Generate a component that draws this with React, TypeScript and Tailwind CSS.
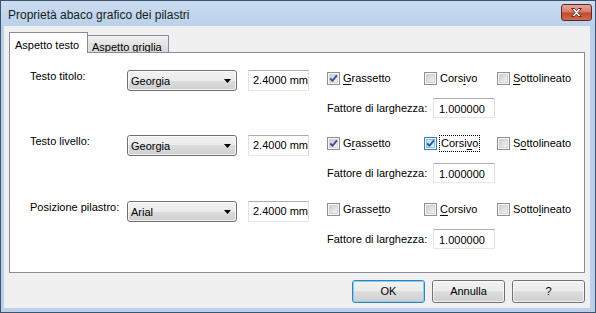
import React from "react";

type CB = { checked?: boolean; hot?: boolean; id: string };

function CheckBox({ checked, hot, id }: CB) {
  return (
    <svg width="13" height="13" viewBox="0 0 13 13" className="shrink-0">
      <defs>
        <linearGradient id={`g-${id}`} x1="0" y1="0" x2="1" y2="1">
          <stop offset="0" stopColor={hot ? "#b9dcf3" : "#c9ccd1"} />
          <stop offset="1" stopColor={hot ? "#eaf6fd" : "#f6f6f6"} />
        </linearGradient>
      </defs>
      <rect x="0.5" y="0.5" width="12" height="12" fill="#f7f7f7" stroke={hot ? "#3c7fb1" : "#8e8f8f"} />
      <rect x="2.5" y="2.5" width="8" height="8" fill={`url(#g-${id})`} stroke={hot ? "#79c6f9" : "#d4d4d4"} />
      {checked && (
        <path d="M3.3 6.4 L5.4 8.9 L9.9 3.4" fill="none" stroke="#3b4d8e" strokeWidth="1.8" strokeLinejoin="round" />
      )}
    </svg>
  );
}

function Mn({ text, idx }: { text: string; idx: number }) {
  return (
    <>
      {text.slice(0, idx)}
      <span className="underline underline-offset-[2px]">{text[idx]}</span>
      {text.slice(idx + 1)}
    </>
  );
}

function Combo({ value }: { value: string }) {
  return (
    <div className="w-[110px] h-[21px] rounded-[3px] border border-[#707070] flex items-center relative overflow-hidden bg-[linear-gradient(#f2f2f2_0%,#ebebeb_50%,#dddddd_50%,#cfcfcf_100%)]">
      <div className="absolute inset-0 rounded-[2px] border border-white/70" />
      <span className="pl-[3px] pt-[1px] relative">{value}</span>
      <svg width="7" height="4" viewBox="0 0 7 4" className="absolute right-[5px] top-[8px]">
        <path d="M0 0 H7 L3.5 4 Z" fill="#000" />
      </svg>
    </div>
  );
}

function TextBox({ value, w }: { value: string; w: string }) {
  return (
    <div className={`${w} h-[21px] bg-white border border-[#e3e9ef] border-t-[#abadb3] border-l-[#e2e3ea] border-r-[#dbdfe6] flex items-center pl-[4px] whitespace-nowrap overflow-hidden`}>
      {value}
    </div>
  );
}

type CheckItem = { text: string; idx: number; checked?: boolean; hot?: boolean; focus?: boolean };

function Group({ label, font, items, mt, id }: { label: string; font: string; items: CheckItem[]; mt: string; id: string }) {
  const widths = ["w-[97px]", "w-[73px]", ""];
  return (
    <div className={mt}>
      <div className="flex h-[21px]">
        <div className="w-[97px] leading-[13px]">{label}</div>
        <Combo value={font} />
        <div className="w-[11px]" />
        <TextBox value="2.4000 mm" w="w-[61px]" />
        <div className="w-[18px]" />
        <div className="flex pt-[2px]">
          {items.map((it, i) => (
            <div key={i} className={`${widths[i]} flex items-start h-[13px]`}>
              <CheckBox checked={it.checked} hot={it.hot} id={`${id}-${i}`} />
              {it.focus ? (
                <span className="ml-[2px] -mt-[2px] border border-dotted border-black px-[1px] leading-[15px]">
                  <Mn text={it.text} idx={it.idx} />
                </span>
              ) : (
                <span className="ml-[3px] leading-[13px]">
                  <Mn text={it.text} idx={it.idx} />
                </span>
              )}
            </div>
          ))}
        </div>
      </div>
      <div className="flex items-center h-[20px] mt-[7px] ml-[297px]">
        <div className="w-[106px] pt-[1px] whitespace-nowrap">Fattore di larghezza:</div>
        <div className="w-[62px] h-[20px] bg-white border border-[#e3e9ef] border-t-[#abadb3] border-l-[#e2e3ea] border-r-[#dbdfe6] flex items-center pl-[5px] pt-[2px]">
          1.000000
        </div>
      </div>
    </div>
  );
}

function Btn({ label, def }: { label: string; def?: boolean }) {
  return (
    <div
      className={`w-[73px] h-[23px] rounded-[3px] border flex items-center justify-center relative ${
        def ? "border-[#3c7fb1]" : "border-[#707070]"
      } bg-[linear-gradient(#f2f2f2_0%,#ebebeb_50%,#dddddd_50%,#cfcfcf_100%)]`}
    >
      <div className={`absolute inset-0 rounded-[2px] border ${def ? "border-[#7ed3f7]" : "border-white/70"}`} />
      <span className="relative">{label}</span>
    </div>
  );
}

export default function App() {
  return (
    <div className="w-[596px] h-[313px] border border-[#3f5267] bg-[#b9d1ea] flex flex-col font-['Liberation_Sans',Arial,sans-serif] text-[11px] text-black overflow-hidden">
      <div className="h-[25px] flex items-center justify-between bg-[linear-gradient(#cadcf1,#b9d1ea)] pl-[7px] pr-[3px]">
        <span className="text-[12px] text-[#1b1b1b] pt-[2px]">Proprietà abaco grafico dei pilastri</span>
        <div className="w-[31px] h-[17px] mb-[2px] rounded-[3px] border border-[#5a2a24] bg-[linear-gradient(#e8aa9d_0%,#d77a68_45%,#c24a31_55%,#cf6b50_100%)] flex items-center justify-center">
          <svg width="13" height="11" viewBox="0 0 13 11">
            <path
              d="M1.5 1.5 H4.5 L6.5 3.7 L8.5 1.5 H11.5 L8 5.5 L11.5 9.5 H8.5 L6.5 7.3 L4.5 9.5 H1.5 L5 5.5 Z"
              fill="#ffffff"
              stroke="#6a2d23"
              strokeWidth="1"
              strokeLinejoin="round"
            />
          </svg>
        </div>
      </div>
      <div className="h-[282px] ml-[3px] mr-[5px] bg-[#f0f0f0] flex flex-col pt-[6px] px-[5px]">
        <div className="flex items-end h-[20px]">
          <div className="relative z-10 -mb-px w-[79px] h-[21px] border border-b-0 border-[#898c95] bg-white flex items-start pl-[5px] pt-[4px] whitespace-nowrap">
            Aspetto testo
          </div>
          <div className="-ml-px w-[82px] h-[17px] border border-b-0 border-[#898c95] bg-[linear-gradient(#f3f3f3,#e3e3e3_50%,#d9d9d9)] flex items-start pl-[4px] pt-[3px] whitespace-nowrap">
            Aspetto griglia
          </div>
        </div>
        <div className="w-[576px] h-[221px] border border-[#898c95] bg-white pt-[17px] pl-[20px]">
          <Group
            id="a"
            mt=""
            label="Testo titolo:"
            font="Georgia"
            items={[
              { text: "Grassetto", idx: 0, checked: true },
              { text: "Corsivo", idx: 4 },
              { text: "Sottolineato", idx: 0 },
            ]}
          />
          <Group
            id="b"
            mt="mt-[17px]"
            label="Testo livello:"
            font="Georgia"
            items={[
              { text: "Grassetto", idx: 1, checked: true },
              { text: "Corsivo", idx: 5, checked: true, hot: true, focus: true },
              { text: "Sottolineato", idx: 1 },
            ]}
          />
          <Group
            id="c"
            mt="mt-[18px]"
            label="Posizione pilastro:"
            font="Arial"
            items={[
              { text: "Grassetto", idx: 6 },
              { text: "Corsivo", idx: 0 },
              { text: "Sottolineato", idx: 5 },
            ]}
          />
        </div>
        <div className="flex justify-end gap-[7px] mt-[7px]">
          <Btn label="OK" def />
          <Btn label="Annulla" />
          <Btn label="?" />
        </div>
      </div>
    </div>
  );
}
